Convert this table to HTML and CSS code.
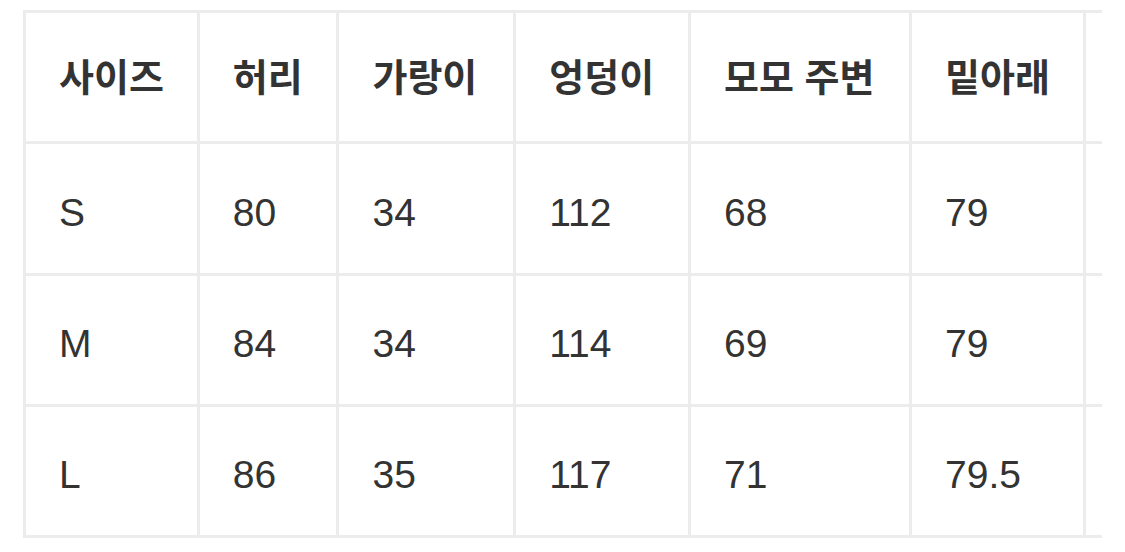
FILE: index.html
```
<!DOCTYPE html>
<html lang="ko">
<head>
<meta charset="utf-8">
<title>사이즈표</title>
<link rel="stylesheet" href="styles.css">
</head>
<body>
<div class="wrap">
  <table class="size-table">
    <thead>
      <tr>
        <th>사이즈</th>
        <th>허리</th>
        <th>가랑이</th>
        <th>엉덩이</th>
        <th>모모 주변</th>
        <th>밑아래</th>
        <th></th>
      </tr>
    </thead>
    <tbody>
      <tr>
        <td>S</td><td>80</td><td>34</td><td>112</td><td>68</td><td>79</td><td></td>
      </tr>
      <tr>
        <td>M</td><td>84</td><td>34</td><td>114</td><td>69</td><td>79</td><td></td>
      </tr>
      <tr>
        <td>L</td><td>86</td><td>35</td><td>117</td><td>71</td><td>79.5</td><td></td>
      </tr>
    </tbody>
  </table>
</div>
</body>
</html>
```
FILE: styles.css
```
html, body {
  margin: 0;
  padding: 0;
  background: #ffffff;
}

.wrap {
  margin: 10px 0 0 23px;
  width: 1079px;
  overflow: hidden;
}

.size-table {
  border-collapse: separate;
  border-spacing: 0;
  table-layout: fixed;
  width: 1300px;
  border-top: 3px solid #ececec;
  border-left: 3px solid #ececec;
  font-family: "Liberation Sans", "Noto Sans CJK KR", sans-serif;
  color: #333333;
  font-size: 39px;
}

.size-table th,
.size-table td {
  border-right: 3px solid #ececec;
  border-bottom: 3px solid #ececec;
  padding: 0 0 0 33px;
  text-align: left;
  vertical-align: middle;
  white-space: nowrap;
  overflow: hidden;
}

.size-table th {
  height: 122px;
  padding-bottom: 6px;
  font-family: "Noto Sans CJK KR", sans-serif;
  font-size: 38px;
  font-weight: 700;
}

.size-table td {
  height: 120px;
  padding-top: 8px;
  font-weight: 400;
}

.size-table tbody tr:first-child td {
  height: 121px;
}

.size-table th:nth-child(1) { width: 137px; }
.size-table th:nth-child(2) { width: 103px; }
.size-table th:nth-child(3) { width: 140px; }
.size-table th:nth-child(4) { width: 138px; }
.size-table th:nth-child(5) { width: 184px; }
.size-table th:nth-child(6) { width: 137px; }
.size-table th:nth-child(7) { width: 200px; }
```
